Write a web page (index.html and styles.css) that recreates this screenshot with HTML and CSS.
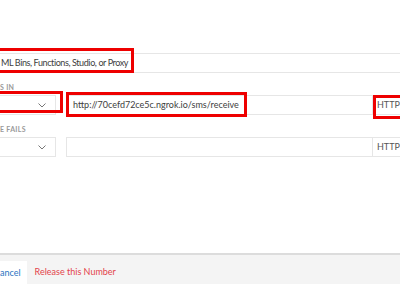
FILE: index.html
```html
<!DOCTYPE html>
<html lang="en">
  <head>
    <meta charset="UTF-8" />
    <title>Configure Number</title>
    <link rel="stylesheet" href="styles.css">
  </head>
  <body>
    <div class="page">
      <div class="content">
        <div class="field-wide">ML Bins, Functions, Studio, or Proxy</div>

        <div class="label">S IN</div>
        <div class="row">
          <div class="select">
            <svg class="chevron" width="8" height="5" viewBox="0 0 8 5"><polyline points="0.5,0.5 4,4 7.5,0.5" /></svg>
          </div>
          <div class="input-group">
            <div class="input">http://70cefd72ce5c.ngrok.io/sms/receive</div>
            <div class="addon">HTTP</div>
          </div>
        </div>

        <div class="label">E FAILS</div>
        <div class="row">
          <div class="select">
            <svg class="chevron" width="8" height="5" viewBox="0 0 8 5"><polyline points="0.5,0.5 4,4 7.5,0.5" /></svg>
          </div>
          <div class="input-group">
            <div class="input"></div>
            <div class="addon">HTTP</div>
          </div>
        </div>
      </div>

      <div class="footer">
        <button class="btn-cancel">ancel</button>
        <a class="release" href="#">Release this Number</a>
      </div>

      <!-- annotation boxes drawn over the form -->
      <div class="mark mark-1"></div>
      <div class="mark mark-2"></div>
      <div class="mark mark-3"></div>
      <div class="mark mark-4"></div>
    </div>
  </body>
</html>
```

FILE: styles.css
```css
body {
  margin: 0;
  font-family: Lato, "Liberation Sans", sans-serif;
  font-size: 9px;
  color: #3d3d3d;
  background: #fff;
  overflow: hidden;
}
.page {
  position: relative;
  width: 400px;
  height: 284px;
  overflow: hidden;
}
.content {
  height: 253px;
  padding-top: 53px;
  box-sizing: border-box;
}
.field-wide {
  height: 20px;
  line-height: 18px;
  margin: 0 -10px;
  padding-left: 10px;
  border: 1px solid #e6e6e6;
  box-sizing: border-box;
  white-space: nowrap;
  letter-spacing: -0.4px;
}
.label {
  font-size: 7px;
  line-height: 8px;
  margin: 10px 0 4px;
  color: #9a9a9a;
  font-weight: bold;
  letter-spacing: 0.3px;
  white-space: nowrap;
}
.row {
  display: flex;
  gap: 10px;
  height: 20px;
  margin: 0 -10px 2px;
}
.select {
  width: 66px;
  display: flex;
  align-items: center;
  justify-content: flex-end;
  padding-right: 9px;
  border: 1px solid #e6e6e6;
  box-sizing: border-box;
}
.chevron polyline {
  fill: none;
  stroke: #777;
  stroke-width: 1;
}
.input-group {
  flex: 1;
  display: flex;
  border: 1px solid #e6e6e6;
  box-sizing: border-box;
}
.input {
  flex: 1;
  line-height: 18px;
  padding-left: 6px;
  white-space: nowrap;
}
.addon {
  width: 37px;
  line-height: 18px;
  padding-left: 4px;
  border-left: 1px solid #e6e6e6;
  color: #555;
  box-sizing: border-box;
}
.footer {
  height: 31px;
  border-top: 2px solid #dcdcdc;
  background: #f4f4f4;
  box-sizing: border-box;
  display: flex;
  align-items: flex-start;
  padding-top: 6px;
}
.btn-cancel {
  height: 23px;
  margin: 0;
  padding: 0 6px 0 0;
  border: none;
  background: #fff;
  color: #2a74c2;
  font-family: inherit;
  font-size: 9px;
  line-height: 21px;
}
.release {
  margin-left: 8px;
  line-height: 21px;
  color: #e3434b;
  text-decoration: none;
}
.mark {
  position: absolute;
  border: 3px solid #ee0000;
  box-sizing: border-box;
}
.mark-1 { left: -3px; top: 48px; width: 137px; height: 25px; }
.mark-2 { left: -3px; top: 91px; width: 66px; height: 22px; }
.mark-3 { left: 66px; top: 92px; width: 181px; height: 25px; }
.mark-4 { left: 373px; top: 95px; width: 40px; height: 24px; }
```
